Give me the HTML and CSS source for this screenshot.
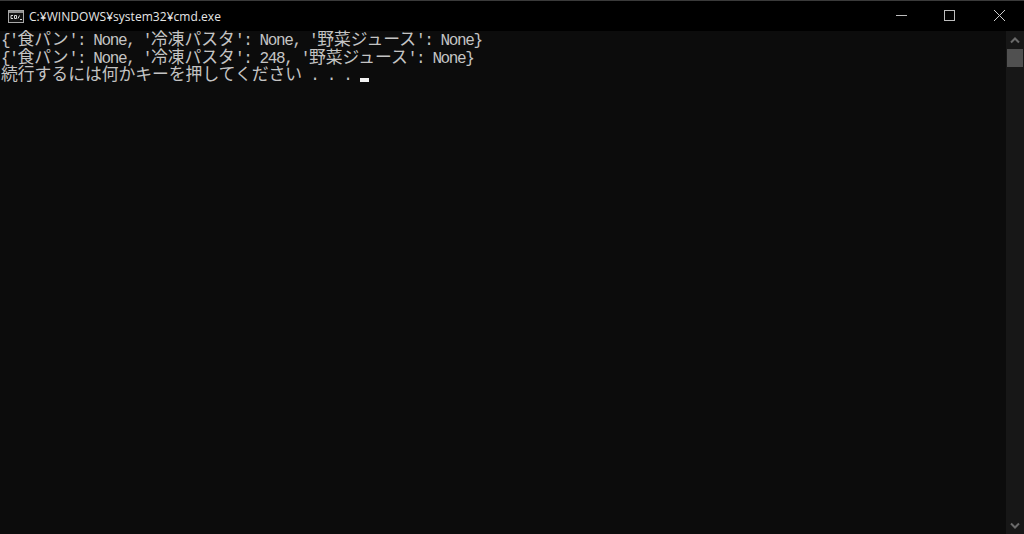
FILE: index.html
```html
<!DOCTYPE html>
<html lang="ja">
<head>
<meta charset="utf-8">
<title>cmd.exe</title>
<link rel="stylesheet" href="styles.css">
</head>
<body>
<div class="window">
  <header class="titlebar">
    <svg class="app-icon" width="16" height="13" viewBox="0 0 16 13">
      <rect x="0.5" y="0.5" width="15" height="12" fill="#111" stroke="#a8a8a8"/>
      <rect x="1" y="1" width="14" height="2" fill="#8f8f8f"/>
      <path d="M3 5.5h2M3 5.5v3h2M6.5 5.5h2v3h-2zM10 8.5l1.500 -3M12 9.500h2" stroke="#d8d8d8" fill="none"/>
    </svg>
    <span class="title">C:¥WINDOWS¥system32¥cmd.exe</span>
    <div class="controls">
      <div class="ctl"><svg width="13" height="12" viewBox="0 0 13 12"><path d="M1 5.500h11" stroke="#bdbdbd"/></svg></div>
      <div class="ctl"><svg width="13" height="12" viewBox="0 0 13 12"><rect x="0.500" y="0.500" width="10" height="10" fill="none" stroke="#bdbdbd"/></svg></div>
      <div class="ctl"><svg width="13" height="12" viewBox="0 0 13 12"><path d="M1 0l11 11M12 0l-11 11" stroke="#cfcfcf"/></svg></div>
    </div>
  </header>
  <div class="body">
    <main class="console">
      <div class="line"><span class="l">{'</span>食パン<span class="l">': None, '</span>冷凍パスタ<span class="l">': None, '</span>野菜ジュース<span class="l">': None}</span></div>
      <div class="line"><span class="l">{'</span>食パン<span class="l">': None, '</span>冷凍パスタ<span class="l">': 248, '</span>野菜ジュース<span class="l">': None}</span></div>
      <div class="line">続行するには何かキーを押してください<span class="l"> . . . </span><span class="cursor"></span></div>
    </main>
    <aside class="scrollbar">
      <div class="arrow"><svg width="10" height="7" viewBox="0 0 10 7"><path d="M1 5.500l4 -4l4 4" fill="none" stroke="#6a6a6a" stroke-width="2"/></svg></div>
      <div class="thumb"></div>
      <div class="track"></div>
      <div class="arrow"><svg width="10" height="7" viewBox="0 0 10 7"><path d="M1 1.500l4 4l4 -4" fill="none" stroke="#6a6a6a" stroke-width="2"/></svg></div>
    </aside>
  </div>
</div>
</body>
</html>
```
FILE: styles.css
```css
html, body { margin: 0; padding: 0; height: 100%; background: #0c0c0c; overflow: hidden; }
.window { display: flex; flex-direction: column; height: 534px; width: 1024px; border-top: 1px solid #3a3a3a; box-sizing: border-box; }
.titlebar { display: flex; align-items: center; height: 30px; background: #000; color: #fff; padding-left: 8px; flex: none; }
.app-icon { flex: none; margin-right: 5px; }
.title { font: 12px "Open Sans", "Liberation Sans", sans-serif; color: #e6e6e6; letter-spacing: 0.04px; }
.controls { display: flex; margin-left: auto; }
.ctl { width: 49px; height: 30px; display: flex; align-items: center; justify-content: center; }
.body { display: flex; flex: 1; min-height: 0; }
.console { flex: 1; padding: 0 0 0 1px; color: #c4c4c4; font: 16.8px/15.5px "Noto Sans CJK JP", sans-serif; }
.line { height: 17.5px; white-space: nowrap; }
.l { font: 16px/15.5px "Liberation Mono", monospace; letter-spacing: -1.37px; white-space: pre; }
.cursor { display: inline-block; width: 9px; height: 4px; background: #f2f2f2; vertical-align: -2px; }
.scrollbar { width: 18px; background: #171717; display: flex; flex-direction: column; flex: none; }
.arrow { height: 18px; display: flex; align-items: center; justify-content: center; background: #171717; }
.thumb { height: 18px; margin: 0 1px 0 1px; background: #505050; }
.track { flex: 1; }
```
